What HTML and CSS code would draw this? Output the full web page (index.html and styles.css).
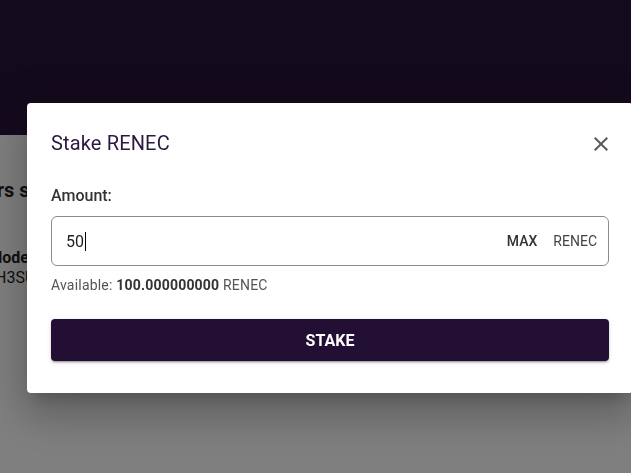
FILE: index.html
```html
<!DOCTYPE html>
<html>
<head>
<meta charset="utf-8">
<link rel="stylesheet" href="styles.css">
</head>
<body>
<div class="page">
  <header class="topbar"></header>
  <main class="content">
    <h2 class="section-title">Validators staking</h2>
    <div class="node-col">
      <div class="node-label">Node</div>
      <div class="node-key">H3SUqWm7kBr9</div>
    </div>
  </main>
</div>
<div class="overlay"></div>
<div class="modal">
  <div class="modal-head">
    <h1 class="modal-title">Stake RENEC</h1>
    <button class="close-btn" aria-label="close">
      <svg width="24" height="24" viewBox="0 0 24 24"><path d="M19 6.41 17.59 5 12 10.59 6.41 5 5 6.41 10.59 12 5 17.59 6.41 19 12 13.41 17.59 19 19 17.59 13.41 12z" fill="#5a5a5a"/></svg>
    </button>
  </div>
  <div class="field-label">Amount:</div>
  <div class="input-box">
    <span class="input-value">50<span class="caret"></span></span>
    <span class="max">MAX</span>
    <span class="unit">RENEC</span>
  </div>
  <div class="available">Available: <b>100.000000000</b> RENEC</div>
  <button class="stake-btn">STAKE</button>
</div>
</body>
</html>
```
FILE: styles.css
```css
html, body {
  margin: 0;
  padding: 0;
  width: 631px;
  height: 473px;
  overflow: hidden;
  background: #ffffff;
  font-family: Roboto, "Liberation Sans", sans-serif;
}
.page {
  width: 631px;
  height: 473px;
}
.topbar {
  height: 135px;
  background: #28143a;
}
.content {
  padding-top: 42px;
}
.section-title {
  margin: 0 0 0 -77px;
  font-size: 20px;
  font-weight: 700;
  line-height: 26px;
  color: #222;
  white-space: nowrap;
}
.node-col {
  margin: 45px 0 0 -9px;
  font-size: 16px;
  line-height: 20px;
  color: #222;
}
.node-label {
  font-weight: 700;
}
.node-key {
  font-weight: 400;
  margin-left: 4px;
}
.overlay {
  position: fixed;
  inset: 0;
  background: rgba(0, 0, 0, 0.5);
}
.modal {
  position: absolute;
  left: 27px;
  top: 103px;
  width: 558px;
  padding: 24px 24px 32px;
  background: #fff;
  border-radius: 4px;
  box-shadow: 0 11px 15px -7px rgba(0,0,0,0.2), 0 24px 38px 3px rgba(0,0,0,0.14), 0 9px 46px 8px rgba(0,0,0,0.12);
}
.modal-head {
  display: flex;
  align-items: center;
  justify-content: space-between;
  height: 32px;
}
.modal-title {
  margin: 0;
  font-size: 20px;
  line-height: 24px;
  font-weight: 400;
  letter-spacing: 0.15px;
  color: #2b1a40;
}
.close-btn {
  border: 0;
  background: none;
  padding: 0;
  width: 24px;
  height: 24px;
  margin-right: -4px;
  margin-top: 2px;
  display: flex;
}
.field-label {
  margin-top: 27px;
  font-size: 16px;
  line-height: 20px;
  font-weight: 500;
  color: #333;
}
.input-box {
  margin-top: 10px;
  height: 48px;
  border: 1px solid #8c8c8c;
  border-radius: 6px;
  display: flex;
  align-items: center;
  padding: 0 11px 0 14px;
}
.input-value {
  flex: 1;
  font-size: 16px;
  color: #222;
  display: flex;
  align-items: center;
}
.caret {
  display: inline-block;
  width: 1px;
  height: 19px;
  background: #000;
  margin-left: 1px;
}
.max {
  font-size: 14px;
  font-weight: 500;
  color: #333;
  margin-right: 16px;
}
.unit {
  font-size: 14px;
  color: #444;
}
.available {
  margin-top: 10px;
  font-size: 14px;
  line-height: 18px;
  letter-spacing: 0.2px;
  color: #555;
}
.available b {
  color: #333;
}
.stake-btn {
  display: block;
  margin-top: 25px;
  width: 100%;
  height: 42px;
  border: 0;
  border-radius: 4px;
  background: #220f33;
  color: #fff;
  font-family: Roboto, "Liberation Sans", sans-serif;
  font-size: 16px;
  font-weight: 700;
  box-shadow: 0 3px 1px -2px rgba(0,0,0,0.2), 0 2px 2px 0 rgba(0,0,0,0.14), 0 1px 5px 0 rgba(0,0,0,0.12);
}
```
